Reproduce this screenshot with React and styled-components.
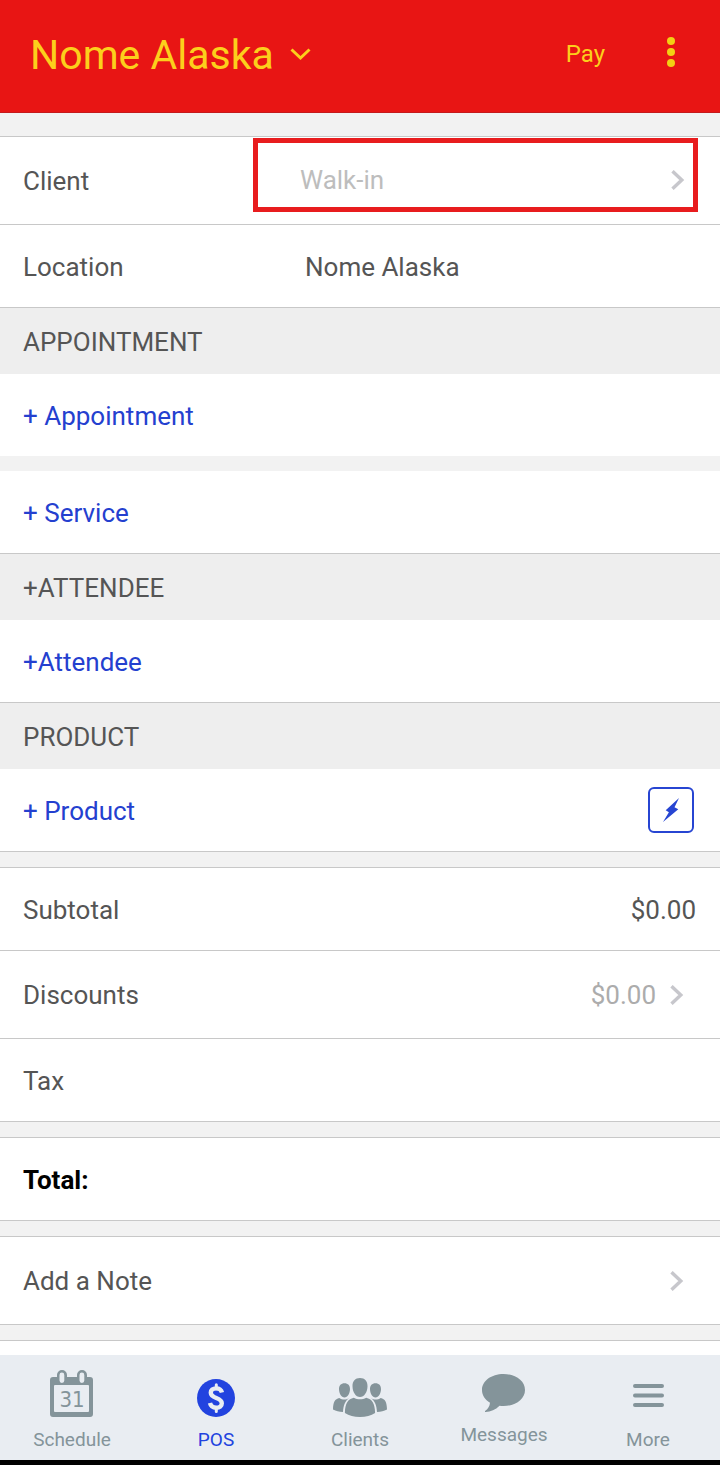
import styled, { createGlobalStyle } from "styled-components";

const GlobalStyle = createGlobalStyle`
  * {
    box-sizing: border-box;
  }
  body {
    margin: 0;
    background: #fff;
    font-family: Roboto, "Liberation Sans", sans-serif;
  }
  button {
    border: 0;
    padding: 0;
    background: none;
    font: inherit;
    color: inherit;
    text-align: left;
    cursor: pointer;
  }
  svg {
    display: block;
    flex: none;
  }
`;

const Screen = styled.div`
  display: flex;
  flex-direction: column;
  min-height: 100vh;
  color: #555;
  font-size: 26px;
  line-height: 32px;
`;

//Top bar
const Header = styled.header`
  display: flex;
  align-items: center;
  padding: 29px 45px 31px 30px;
  background: #e81514;
  border-bottom: 1px solid #c41a1c;
  color: #fccf1c;
`;

const LocationButton = styled.button`
  display: flex;
  align-items: center;
  gap: 16px;
  margin-right: auto;
`;

const Title = styled.h1`
  margin: 0;
  font-size: 41px;
  font-weight: 400;
  line-height: 52px;
`;

const PayButton = styled.button`
  margin-right: 62px;
  padding-bottom: 2px;
  font-size: 24px;
  line-height: 46px;
`;

const Main = styled.main`
  flex: 1;
`;

const Gap = styled.div`
  height: ${(props) => (props.$plain ? 15 : props.$top ? 24 : 16)}px;
  background: #f2f2f2;
  border-bottom: ${(props) => (props.$plain ? "0" : "1px solid #c8c8c8")};
`;

const Row = styled.div`
  display: flex;
  align-items: center;
  min-height: ${(props) => (props.$tall ? 88 : 83)}px;
  padding: ${(props) => (props.$tall ? 0 : 2)}px 24px 0 23px;
  border-bottom: 1px solid #c8c8c8;
`;

const OpenRow = styled(Row)`
  min-height: 82px;
  border-bottom: 0;
`;

const ButtonRow = styled(Row).attrs({ as: "button", type: "button" })`
  width: 100%;
  padding-right: 36px;
  border-bottom: 1px solid #c8c8c8;
`;

const SectionTitle = styled.h2`
  margin: 0;
  padding: 18px 23px 16px;
  background: #eee;
  font-size: 26px;
  font-weight: 400;
  line-height: 32px;
`;

const Label = styled.span`
  width: ${(props) => props.$width || "auto"};
`;

const Amount = styled.span`
  margin-left: auto;
  color: ${(props) => (props.$muted ? "#acacac" : "inherit")};
`;

const ClientPicker = styled.button`
  flex: 1;
  display: flex;
  align-items: center;
  justify-content: space-between;
  align-self: flex-start;
  height: 74px;
  margin: 1px -2px 0 0;
  padding: 10px 8px 0 42px;
  border: 5px solid #e81c1e;
  color: #bdbdbd;
`;

const AddButton = styled.button`
  color: #2440cf;
`;

const QuickSale = styled.button`
  display: flex;
  align-items: center;
  justify-content: center;
  width: 46px;
  height: 46px;
  margin: 0 2px 2px auto;
  border: 2px solid #2745d2;
  border-radius: 6px;
`;

const Total = styled.strong`
  color: #000;
  font-weight: 700;
`;

const Push = styled.span`
  margin-left: ${(props) => props.$space || "auto"};
`;

//Bottom tabs
const TabBar = styled.nav`
  display: grid;
  grid-template-columns: repeat(5, 1fr);
  height: 110px;
  background: #e9edf2;
  border-bottom: 5px solid #000;
`;

const Tab = styled.button`
  display: flex;
  flex-direction: column;
  align-items: center;
  padding-top: ${(props) => (props.$raised ? 10 : 15)}px;
  color: ${(props) => (props.$active ? "#2243df" : "#84949a")};
  font-size: 19px;
  line-height: 24px;
`;

const TabIcon = styled.span`
  display: flex;
  align-items: flex-end;
  height: 47px;
  margin-bottom: 11px;
`;

const Chevron = () => (
  <svg width="14" height="20" viewBox="0 0 14 20" fill="none" stroke="#c7c7cc" strokeWidth="3.4">
    <path d="M1.5 1.2 10.8 10 1.5 18.8" />
  </svg>
);

const CalendarIcon = () => (
  <svg width="44" height="47" viewBox="0 0 44 47">
    <path
      fill="currentColor"
      fillRule="evenodd"
      d="M3 7h4V5a5 5 0 0 1 10 0v2h10V5a5 5 0 0 1 10 0v2h3a3 3 0 0 1 3 3v34a3 3 0 0 1-3 3H3a3 3 0 0 1-3-3V10a3 3 0 0 1 3-3ZM5 15a1 1 0 0 0-1 1v25a1 1 0 0 0 1 1h33a1 1 0 0 0 1-1V16a1 1 0 0 0-1-1ZM9.500 5v5.500a2.400 2.400 0 0 0 4.800 0V5a2.400 2.400 0 0 0-4.800 0ZM29.500 5v5.500a2.400 2.400 0 0 0 4.800 0V5a2.400 2.400 0 0 0-4.800 0Z"
    />
    <text
      x="22"
      y="37"
      fill="currentColor"
      fontFamily="DejaVu Sans Condensed, DejaVu Sans, sans-serif"
      fontSize="22"
      textAnchor="middle"
    >
      31
    </text>
  </svg>
);

const DollarIcon = () => (
  <svg width="38" height="38" viewBox="0 0 38 38" fill="none">
    <circle cx="19" cy="19" r="19" fill="currentColor" />
    <path
      stroke="#e9edf2"
      strokeWidth="4.400"
      d="M25 13.500C24.200 10.600 22.300 9.400 19.200 9.400c-3.400 0-5.400 1.700-5.400 4.300 0 6.300 11 4.200 11 10.500 0 2.800-2.100 4.600-5.600 4.600-3.400 0-5.500-1.700-6.200-4.700"
    />
    <path stroke="#e9edf2" strokeWidth="3" strokeLinecap="round" d="M19.300 5.800v4M19.300 28.500v4" />
  </svg>
);

const ClientsIcon = () => (
  <svg width="54" height="39" viewBox="0 0 54 39" fill="currentColor">
    <path d="M27 0c4.800 0 7.600 3.200 7.500 8.200C34.400 14 31.300 19 27 19s-7.400-5-7.500-10.800C19.400 3.200 22.200 0 27 0Z" />
    <path d="M20.800 19.700c3.800 2.200 8.600 2.200 12.400 0 5.800 1.500 8.700 5.300 8.900 15.300-4.200 2.600-9 4-15.100 4s-10.900-1.400-15.100-4c.2-10 3.100-13.800 8.900-15.300Z" />
    <path d="M11.500 5.300c3.500 0 5.600 2.200 5.500 6-.1 4.300-2.400 8.100-5.500 8.100S6.100 15.600 6 11.300c-.1-3.800 2-6 5.500-6Z" />
    <path d="M6.300 20c3 2.100 6.800 2.100 9.700.2-3.800 2.800-5.600 6.800-6 13.800-4-.3-7-1-10-2.500.1-7.500 2-10.500 6.300-11.500Z" />
    <path d="M42.500 5.300c3.500 0 5.600 2.200 5.500 6-.1 4.300-2.400 8.100-5.500 8.100s-5.400-3.800-5.500-8.100c-.1-3.800 2-6 5.500-6Z" />
    <path d="M47.700 20c-3 2.100-6.800 2.100-9.700.2 3.800 2.800 5.600 6.800 6 13.800 4-.3 7-1 10-2.500-.1-7.500-2-10.500-6.300-11.500Z" />
  </svg>
);

const MessagesIcon = () => (
  <svg width="44" height="38" viewBox="0 0 44 38" fill="currentColor">
    <path d="M21.500 0C33.600 0 43 6.900 43 16s-9.400 16-21.500 16c-1.400 0-2.700-.1-4-.3C13.500 35.600 8.700 38 3.600 38c-.8 0-.9-.8-.2-1.300 2.600-2 4.300-4.600 4.600-8C3 25.900 0 21.300 0 16 0 6.900 9.400 0 21.500 0Z" />
  </svg>
);

const MoreIcon = () => (
  <svg width="32" height="33" viewBox="0 0 32 33" stroke="currentColor" strokeWidth="4" strokeLinecap="round">
    <path d="M3 2h27M3 11.500h27M3 21h27" />
  </svg>
);

const tabs = [
  { name: "Schedule", icon: CalendarIcon },
  { name: "POS", icon: DollarIcon, active: true },
  { name: "Clients", icon: ClientsIcon },
  { name: "Messages", icon: MessagesIcon, raised: true },
  { name: "More", icon: MoreIcon },
];

export default function App() {
  return (
    <Screen>
      <GlobalStyle />
      <Header>
        <LocationButton type="button">
          <Title>Nome Alaska</Title>
          <svg width="21" height="14" viewBox="0 0 21 14" fill="none" stroke="currentColor" strokeWidth="3">
            <path d="M1.500 1.500 10.500 10l9-8.500" />
          </svg>
        </LocationButton>
        <PayButton type="button">Pay</PayButton>
        <button type="button" aria-label="Options">
          <svg width="8" height="36" viewBox="0 0 8 36" fill="#f3d013">
            <circle cx="4" cy="4" r="4" />
            <circle cx="4" cy="15" r="4" />
            <circle cx="4" cy="26" r="4" />
          </svg>
        </button>
      </Header>

      <Main>
        <Gap $top />
        <Row $tall>
          <Label id="client" $width="230px">Client</Label>
          <ClientPicker type="button" aria-describedby="client">
            Walk-in
            <Chevron />
          </ClientPicker>
        </Row>
        <Row>
          <Label $width="282px">Location</Label>
          <span>Nome Alaska</span>
        </Row>

        <SectionTitle>APPOINTMENT</SectionTitle>
        <OpenRow>
          <AddButton type="button">+ Appointment</AddButton>
        </OpenRow>
        <Gap $plain />
        <Row>
          <AddButton type="button">+ Service</AddButton>
        </Row>

        <SectionTitle>+ATTENDEE</SectionTitle>
        <Row>
          <AddButton type="button">+Attendee</AddButton>
        </Row>

        <SectionTitle>PRODUCT</SectionTitle>
        <Row>
          <AddButton type="button">+ Product</AddButton>
          <QuickSale type="button" aria-label="Quick sale">
            <svg width="16" height="24" viewBox="0 0 16 24" fill="#2745d2">
              <path d="M16 0 2.700 12.300l3.200 1.900L0 24l15.300-12.800-3.800-1.900Z" />
            </svg>
          </QuickSale>
        </Row>

        {/* Amounts */}
        <Gap />
        <Row>
          <Label>Subtotal</Label>
          <Amount>$0.00</Amount>
        </Row>
        <ButtonRow $tall>
          <Label>Discounts</Label>
          <Amount $muted>$0.00</Amount>
          <Push $space="14px">
            <Chevron />
          </Push>
        </ButtonRow>
        <Row>
          <Label>Tax</Label>
        </Row>
        <Gap />
        <Row>
          <Total>Total:</Total>
        </Row>
        <Gap />
        <ButtonRow $tall>
          <Label>Add a Note</Label>
          <Push>
            <Chevron />
          </Push>
        </ButtonRow>
        <Gap />
      </Main>

      <TabBar>
        {tabs.map(({ name, icon: Icon, active, raised }) => (
          <Tab key={name} type="button" $active={active} $raised={raised}>
            <TabIcon>
              <Icon />
            </TabIcon>
            {name}
          </Tab>
        ))}
      </TabBar>
    </Screen>
  );
}
